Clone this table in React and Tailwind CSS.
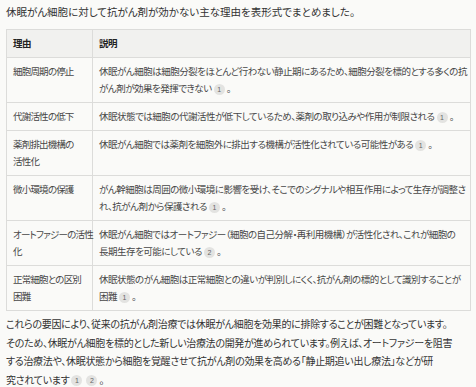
import React from "react";

const Ref = ({ n }) => (
  <span className="inline-flex items-center justify-center w-[11px] h-[11px] rounded-full bg-[#e3e3e1] text-[#666] text-[7px] leading-none tracking-normal font-['Liberation_Sans',sans-serif] align-middle mx-[2px]">
    {n}
  </span>
);

const rows = [
  {
    reason: ["細胞周期の停止"],
    desc: [
      "休眠がん細胞は細胞分裂をほとんど行わない静止期にあるため、細胞分裂を標的とする多くの抗",
      <>がん剤が効果を発揮できない<Ref n={1} />。</>,
    ],
  },
  {
    reason: ["代謝活性の低下"],
    desc: [<>休眠状態では細胞の代謝活性が低下しているため、薬剤の取り込みや作用が制限される<Ref n={1} />。</>],
  },
  {
    reason: ["薬剤排出機構の", "活性化"],
    desc: [<>休眠がん細胞では薬剤を細胞外に排出する機構が活性化されている可能性がある<Ref n={1} />。</>],
  },
  {
    reason: ["微小環境の保護"],
    desc: [
      "がん幹細胞は周囲の微小環境に影響を受け、そこでのシグナルや相互作用によって生存が調整さ",
      <>れ、抗がん剤から保護される<Ref n={1} />。</>,
    ],
  },
  {
    reason: ["オートファジーの活性", "化"],
    desc: [
      "休眠がん細胞ではオートファジー（細胞の自己分解・再利用機構）が活性化され、これが細胞の",
      <>長期生存を可能にしている<Ref n={2} />。</>,
    ],
  },
  {
    reason: ["正常細胞との区別", "困難"],
    desc: [
      "休眠状態のがん細胞は正常細胞との違いが判別しにくく、抗がん剤の標的として識別することが",
      <>困難<Ref n={1} />。</>,
    ],
  },
];

const Lines = ({ lines, lh }) =>
  lines.map((l, i) => (
    <div key={i} className={`whitespace-nowrap ${lh}`}>
      {l}
    </div>
  ));

export default function App() {
  return (
    <div className="w-[476px] h-[387px] overflow-hidden bg-[#fafaf8] px-[6px] pt-[3px] text-[#333] font-['Noto_Sans_CJK_JP',sans-serif] [font-feature-settings:'palt']">
      <p className="text-[10.5px] leading-[18px] whitespace-nowrap">
        休眠がん細胞に対して抗がん剤が効かない主な理由を表形式でまとめました。
      </p>

      <table className="mt-[8px] w-[465px] table-fixed border-collapse text-[9.5px] tracking-[-0.5px] text-[#474747]">
        <colgroup>
          <col className="w-[86px]" />
          <col />
        </colgroup>
        <thead>
          <tr className="bg-[#f1f1ef]">
            <th className="h-[28px] border border-[#dcdcda] px-[6px] py-0 text-left font-bold text-[#222] leading-[17px]">理由</th>
            <th className="h-[28px] border border-[#dcdcda] px-[6px] py-0 text-left font-bold text-[#222] leading-[17px]">説明</th>
          </tr>
        </thead>
        <tbody>
          {rows.map((r, i) => (
            <tr key={i}>
              <td className="border border-[#dcdcda] px-[6px] py-[5px] align-top tracking-[-0.8px]">
                <Lines lines={r.reason} lh="h-[17px] leading-[17px]" />
              </td>
              <td className="border border-[#dcdcda] px-[6px] py-[5px] align-top">
                <Lines lines={r.desc} lh="h-[17px] leading-[17px]" />
              </td>
            </tr>
          ))}
        </tbody>
      </table>

      <div className="mt-[4px] text-[10px] tracking-[-0.3px]">
        <Lines
          lh="h-[18.5px] leading-[18.5px]"
          lines={[
            "これらの要因により、従来の抗がん剤治療では休眠がん細胞を効果的に排除することが困難となっています。",
            "そのため、休眠がん細胞を標的とした新しい治療法の開発が進められています。例えば、オートファジーを阻害",
            "する治療法や、休眠状態から細胞を覚醒させて抗がん剤の効果を高める「静止期追い出し療法」などが研",
            <>究されています<Ref n={1} /><Ref n={2} />。</>,
          ]}
        />
      </div>
    </div>
  );
}
